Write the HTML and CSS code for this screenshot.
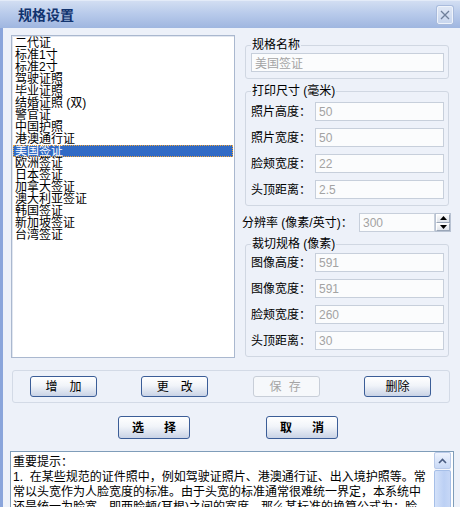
FILE: index.html
```html
<!DOCTYPE html>
<html lang="zh-CN">
<head>
  <meta charset="UTF-8" />
  <title>规格设置</title>
  <link rel="stylesheet" href="styles.css">
</head>
<body>
  <div class="window">
    <div class="titlebar">
      <span class="title">规格设置</span>
      <span class="close">
        <svg width="10" height="10" viewBox="0 0 10 10"><path d="M1 1 L9 9 M9 1 L1 9" stroke="#6f7f9a" stroke-width="1.3" fill="none"/></svg>
      </span>
    </div>

    <div class="body">
      <div class="top">
        <ul class="listbox">
          <li>二代证</li>
          <li>标准1寸</li>
          <li>标准2寸</li>
          <li>驾驶证照</li>
          <li>毕业证照</li>
          <li>结婚证照 (双)</li>
          <li>警官证</li>
          <li>中国护照</li>
          <li>港澳通行证</li>
          <li class="selected">美国签证</li>
          <li>欧洲签证</li>
          <li>日本签证</li>
          <li>加拿大签证</li>
          <li>澳大利亚签证</li>
          <li>韩国签证</li>
          <li>新加坡签证</li>
          <li>台湾签证</li>
        </ul>

        <div class="side">
          <fieldset class="group">
            <legend>规格名称</legend>
            <input class="field wide" value="美国签证" readonly>
          </fieldset>

          <fieldset class="group print-group">
            <legend>打印尺寸 (毫米)</legend>
            <div class="row"><label>照片高度：</label><input class="field" value="50" readonly></div>
            <div class="row"><label>照片宽度：</label><input class="field" value="50" readonly></div>
            <div class="row"><label>脸颊宽度：</label><input class="field" value="22" readonly></div>
            <div class="row"><label>头顶距离：</label><input class="field" value="2.5" readonly></div>
          </fieldset>

          <div class="dpi">
            <label>分辨率 (像素/英寸)：</label>
            <input class="field" value="300" readonly>
            <span class="spin">
              <span class="spin-half"><svg width="7" height="4" viewBox="0 0 7 4"><path d="M0 4 L3.5 0 L7 4 Z" fill="#000"/></svg></span>
              <span class="spin-half"><svg width="7" height="4" viewBox="0 0 7 4"><path d="M0 0 L3.5 4 L7 0 Z" fill="#000"/></svg></span>
            </span>
          </div>

          <fieldset class="group crop-group">
            <legend>裁切规格 (像素)</legend>
            <div class="row"><label>图像高度：</label><input class="field" value="591" readonly></div>
            <div class="row"><label>图像宽度：</label><input class="field" value="591" readonly></div>
            <div class="row"><label>脸颊宽度：</label><input class="field" value="260" readonly></div>
            <div class="row"><label>头顶距离：</label><input class="field" value="30" readonly></div>
          </fieldset>
        </div>
      </div>

      <div class="edit-bar">
        <button class="btn">增　加</button>
        <button class="btn">更　改</button>
        <button class="btn disabled">保 存</button>
        <button class="btn">删除</button>
      </div>

      <div class="dialog-bar">
        <button class="btn big">选　择</button>
        <button class="btn big">取　消</button>
      </div>

      <div class="notes">
        <div class="notes-text"><div>重要提示：</div><div>1.  在某些规范的证件照中，例如驾驶证照片、港澳通行证、出入境护照等。常</div><div>常以头宽作为人脸宽度的标准。由于头宽的标准通常很难统一界定，本系统中</div><div>还是统一为脸宽，即两脸颊(耳根)之间的宽度。那么某标准的换算公式为：脸</div></div>
        <div class="scrollbar">
          <span class="scroll-up">
            <svg width="9" height="6" viewBox="0 0 9 6"><path d="M1 5 L4.5 1.5 L8 5" stroke="#4a5d82" stroke-width="1.6" fill="none"/></svg>
          </span>
          <span class="scroll-thumb"></span>
        </div>
      </div>
    </div>
  </div>
</body>
</html>
```

FILE: styles.css
```css
* {
  box-sizing: border-box;
}
body {
  margin: 0;
  background: #fff;
  font-family: "Liberation Sans", "Noto Sans CJK SC", sans-serif;
  font-size: 12px;
  line-height: 12px;
  color: #000;
}
.window {
  width: 460px;
  height: 507px;
  overflow: hidden;
  display: flex;
  flex-direction: column;
  background: #edf1f9;
}
.titlebar {
  height: 28px;
  flex: none;
  display: flex;
  align-items: center;
  justify-content: space-between;
  padding: 0 7px 0 18px;
  background: linear-gradient(#d2def2, #b9cbeb 45%, #9fb6e0);
  border-top: 1px solid #e3ebf8;
}
.title {
  font-size: 14px;
  line-height: 14px;
  font-weight: bold;
  color: #12346f;
}
.close {
  width: 16px;
  height: 18px;
  display: flex;
  align-items: center;
  justify-content: center;
  border: 1px solid #eef3fb;
  border-radius: 2px;
  background: linear-gradient(#dfe7f5, #c8d6ee);
  box-shadow: 0 0 0 1px #a9bbdc;
}
.body {
  flex: 1;
  display: flex;
  flex-direction: column;
  border-left: 3px solid #8aa5db;
  padding: 7px 7px 0 8px;
}
.top {
  display: flex;
  gap: 7px;
}
.listbox {
  width: 224px;
  height: 323px;
  margin: 0;
  padding: 1px;
  list-style: none;
  background: #fff;
  border: 1px solid #aab8cf;
  box-shadow: inset 1px 1px 0 #e2e7f0;
}
.listbox li {
  height: 12px;
  line-height: 12px;
  padding-left: 2px;
  white-space: nowrap;
}
.listbox li.selected {
  background: #316ac5;
  color: #fff;
  outline: 1px dotted #f0a53a;
  outline-offset: -1px;
}
.side {
  width: 210px;
  display: flex;
  flex-direction: column;
  padding-top: 4px;
}
.group {
  margin: 0 3px;
  padding: 2px 4px 6px 5px;
  border: 1px solid #d0d7e2;
  border-radius: 3px;
  min-width: 0;
}
.group legend {
  padding: 0 1px;
  line-height: 12px;
}
.print-group {
  margin-top: 6px;
  padding-top: 5px;
}
.crop-group {
  margin-top: 6px;
  padding-top: 3px;
}
.row {
  display: flex;
  align-items: center;
  height: 19px;
}
.row + .row {
  margin-top: 7px;
}
.row label {
  width: 64px;
  flex: none;
}
.field {
  height: 19px;
  width: 129px;
  margin: 0;
  padding: 0 3px;
  border: 1px solid #c7cfdb;
  background: #fbfcfd;
  color: #a3a3a3;
  font: inherit;
  outline: none;
}
.field.wide {
  width: 193px;
}
.dpi {
  display: flex;
  align-items: center;
  height: 19px;
  margin-top: 7px;
}
.dpi label {
  width: 117px;
  flex: none;
  white-space: nowrap;
}
.dpi .field {
  width: 76px;
}
.spin {
  width: 16px;
  height: 19px;
  display: flex;
  flex-direction: column;
  border: 1px solid #b8c2d2;
  background: #f1f3f7;
}
.spin-half {
  flex: 1;
  display: flex;
  align-items: center;
  justify-content: center;
  background: linear-gradient(#fbfbfb, #dfe3ea);
  border: 1px solid #fff;
  border-right-color: #9aa6b8;
  border-bottom-color: #9aa6b8;
}
.edit-bar {
  margin: 12px 3px 0 1px;
  height: 33px;
  display: flex;
  align-items: center;
  justify-content: space-between;
  padding: 0 18px 0 17px;
  border: 1px solid #d3dae6;
  border-radius: 3px;
}
.btn {
  width: 67px;
  height: 21px;
  padding: 0;
  border: 1px solid #3b5d97;
  border-radius: 3px;
  background: linear-gradient(#ffffff, #f1f4f9 45%, #c9d3e6);
  font: inherit;
  color: #000;
}
.btn.disabled {
  border-color: #c8ced8;
  background: #f6f8fb;
  color: #a5a5a5;
  letter-spacing: 2px;
}
.dialog-bar {
  display: flex;
  justify-content: center;
  gap: 76px;
  margin-top: 13px;
  padding-right: 8px;
}
.btn.big {
  width: 72px;
  height: 23px;
  font-weight: bold;
  letter-spacing: 4px;
  padding-left: 4px;
}
.notes {
  margin: 12px -1px 0 -1px;
  height: 70px;
  flex: none;
  display: flex;
  border: 1px solid #7f9db9;
  background: #fff;
}
.notes-text {
  flex: 1;
  padding: 3px 2px;
  line-height: 15px;
  white-space: pre;
  overflow: hidden;
}
.scrollbar {
  width: 17px;
  margin: 0 2px 0 1px;
  display: flex;
  flex-direction: column;
  gap: 1px;
  background: #f3f5fa;
}
.scroll-up {
  height: 17px;
  display: flex;
  align-items: center;
  justify-content: center;
  border: 1px solid #b9cae9;
  border-radius: 2px;
  background: linear-gradient(#eef3fd, #c9d9f6);
}
.scroll-thumb {
  height: 40px;
  border: 1px solid #a6bfe8;
  border-radius: 2px;
  background: linear-gradient(90deg, #d3e1f9, #bcd0f4 60%, #c6d7f6);
}
```
